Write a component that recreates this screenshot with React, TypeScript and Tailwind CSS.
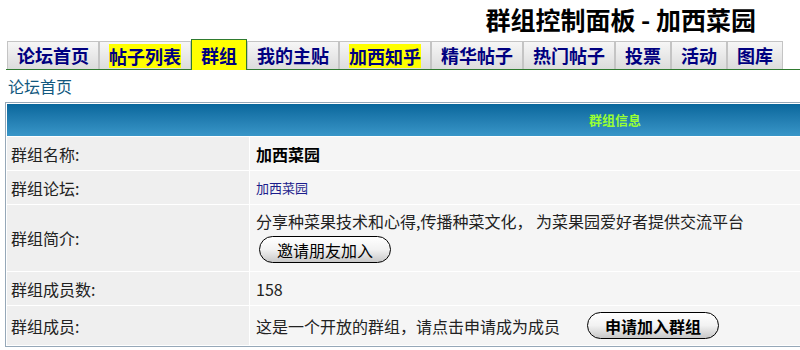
import React from 'react';

const tabs = [
  { label: '论坛首页' },
  { label: '帖子列表', mark: true },
  { label: '群组', active: true },
  { label: '我的主贴' },
  { label: '加西知乎', mark: true },
  { label: '精华帖子' },
  { label: '热门帖子' },
  { label: '投票' },
  { label: '活动' },
  { label: '图库' },
];

const font = { fontFamily: '"Noto Sans CJK SC", "Noto Sans", sans-serif' };

const PillButton: React.FC<{ text: string; bold?: boolean }> = ({ text, bold }) => (
  <button
    className={`h-[27px] w-[132px] rounded-full border border-black bg-gradient-to-b from-white via-[#f2f2f2] to-[#c8c8c8] text-[16px] leading-none text-black ${
      bold ? 'font-bold' : ''
    }`}
  >
    {text}
  </button>
);

const App: React.FC = () => {
  return (
    <div className="h-[350px] w-[800px] overflow-hidden bg-white" style={font}>
      {/* 标题 */}
      <div className="flex h-[39px] justify-end pr-[44px] pt-[1px]">
        <h1 className="text-[25px] font-bold leading-[36px] text-black">群组控制面板 - 加西菜园</h1>
      </div>

      {/* 导航标签 */}
      <div className="ml-[6px] flex h-[31px] items-end border-b border-[#2f7a2f] pl-[1px]">
        {tabs.map((t) =>
          t.active ? (
            <div
              key={t.label}
              className="-mb-px flex h-[31px] items-center border border-b-0 border-[#2f7a2f] bg-[#ffff00] px-[9px] text-[18px] font-bold text-[#000080]"
            >
              {t.label}
            </div>
          ) : (
            <div
              key={t.label}
              className="flex h-[28px] items-center border border-b-0 border-[#c4c4c4] bg-gradient-to-b from-[#f6f6f6] to-[#dcdcdc] px-[9px] text-[18px] font-bold text-[#000080]"
            >
              <span className={t.mark ? 'bg-[#ffff00] leading-[24px]' : ''}>{t.label}</span>
            </div>
          )
        )}
      </div>

      {/* 面包屑 */}
      <div className="h-[32px] pl-[8px] pt-[6px] text-[16px] leading-[20px] text-[#12587e]">论坛首页</div>

      {/* 群组信息表 */}
      <div className="ml-[5px] w-[830px] border border-[#96a8b8] bg-white p-px">
        <div className="grid grid-cols-[242px_1fr] gap-px bg-white">
          <div className="col-span-2 grid h-[32px] grid-cols-[242px_1fr] bg-gradient-to-b from-[#08679c] to-[#3896c8]">
            <div />
            <div className="pl-[340px] text-[13px] font-bold leading-[32px] text-[#99ff33]">群组信息</div>
          </div>

          <div className="flex h-[33px] items-center bg-[#efefef] pl-[4px] text-[16px] text-[#222]">群组名称:</div>
          <div className="flex items-center bg-[#f5f5f5] pl-[6px] text-[16px] font-bold text-black">加西菜园</div>

          <div className="flex h-[33px] items-center bg-[#efefef] pl-[4px] text-[16px] text-[#222]">群组论坛:</div>
          <div className="flex items-center bg-[#f5f5f5] pl-[6px] text-[13px] text-[#1c1c8c]">加西菜园</div>

          <div className="flex h-[66px] items-center bg-[#efefef] pl-[4px] text-[16px] text-[#222]">群组简介:</div>
          <div className="flex flex-col items-start bg-[#f5f5f5] pl-[6px] pt-[5px] text-[16px] leading-[22px] text-[#222]">
            <span>分享种菜果技术和心得,传播种菜文化， 为菜果园爱好者提供交流平台</span>
            <div className="mt-[4px] pl-[3px]">
              <PillButton text="邀请朋友加入" />
            </div>
          </div>

          <div className="flex h-[33px] items-center bg-[#efefef] pl-[4px] text-[16px] text-[#222]">群组成员数:</div>
          <div className="flex items-center bg-[#f5f5f5] pl-[6px] text-[16px] text-[#222]">158</div>

          <div className="flex h-[39px] items-center bg-[#efefef] pl-[4px] text-[16px] text-[#222]">群组成员:</div>
          <div className="flex items-center gap-[27px] bg-[#f5f5f5] pl-[6px] text-[16px] text-[#222]">
            <span>这是一个开放的群组，请点击申请成为成员</span>
            <PillButton text="申请加入群组" bold />
          </div>
        </div>
      </div>
    </div>
  );
};

export default App;
